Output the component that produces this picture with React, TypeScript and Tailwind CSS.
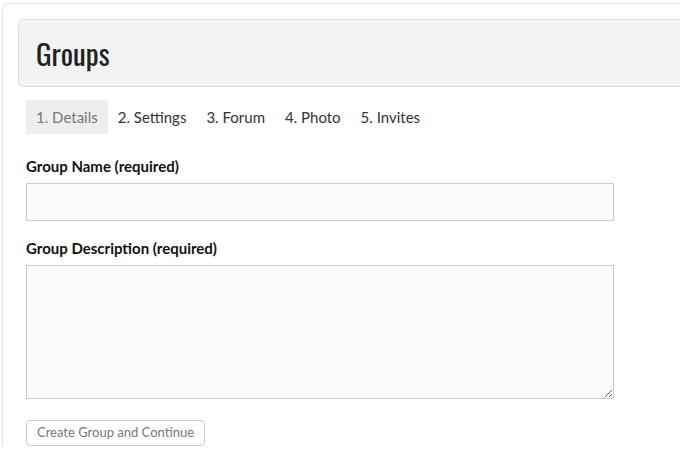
const tabs = ["1. Details", "2. Settings", "3. Forum", "4. Photo", "5. Invites"];

export default function App() {
  return (
    <div className="min-h-[451px] bg-white pl-[2px] pt-[3px] font-['Lato',sans-serif] overflow-hidden">
      {/* OUTER CARD */}
      <div className="w-[720px] rounded-tl-[6px] border-l border-t border-[#e3e3e3] pl-[15px] pt-[15px]">
        {/* HEADER */}
        <div className="flex h-[68px] items-center rounded-l-[6px] border border-r-0 border-[#dcdcdc] bg-[#f3f3f3] pl-[17px]">
          <h1 className="font-['Oswald','DejaVu_Sans_Condensed','DejaVu_Sans',sans-serif] text-[29px] font-normal text-[#222] [font-stretch:condensed]">
            Groups
          </h1>
        </div>

        {/* TABS */}
        <div className="mt-[13px] ml-[8px] flex gap-[10px] text-[15px]">
          {tabs.map((t, i) => (
            <div
              key={t}
              className={
                i === 0
                  ? "h-[34px] px-[10px] leading-[34px] bg-[#eeeeee] text-[#777]"
                  : "h-[34px] px-[0px] mr-[10px] leading-[34px] text-[#333]"
              }
            >
              {t}
            </div>
          ))}
        </div>

        {/* FORM */}
        <div className="ml-[8px] w-[588px]">
          <label className="mt-[21px] block text-[15px] font-bold leading-[22px] text-[#111]">
            Group Name (required)
          </label>
          <input className="mt-[6px] block h-[38px] w-full border border-[#cccccc] bg-[#fafafa] outline-none" />

          <label className="mt-[16px] block text-[15px] font-bold leading-[22px] text-[#111]">
            Group Description (required)
          </label>
          <textarea className="mt-[6px] block h-[134px] w-full border border-[#cccccc] bg-[#fafafa] outline-none" />

          <button className="mt-[21px] h-[26px] rounded-[4px] border border-[#cccccc] bg-white px-[10px] text-[13px] text-[#777]">
            Create Group and Continue
          </button>
        </div>
      </div>
    </div>
  );
}
